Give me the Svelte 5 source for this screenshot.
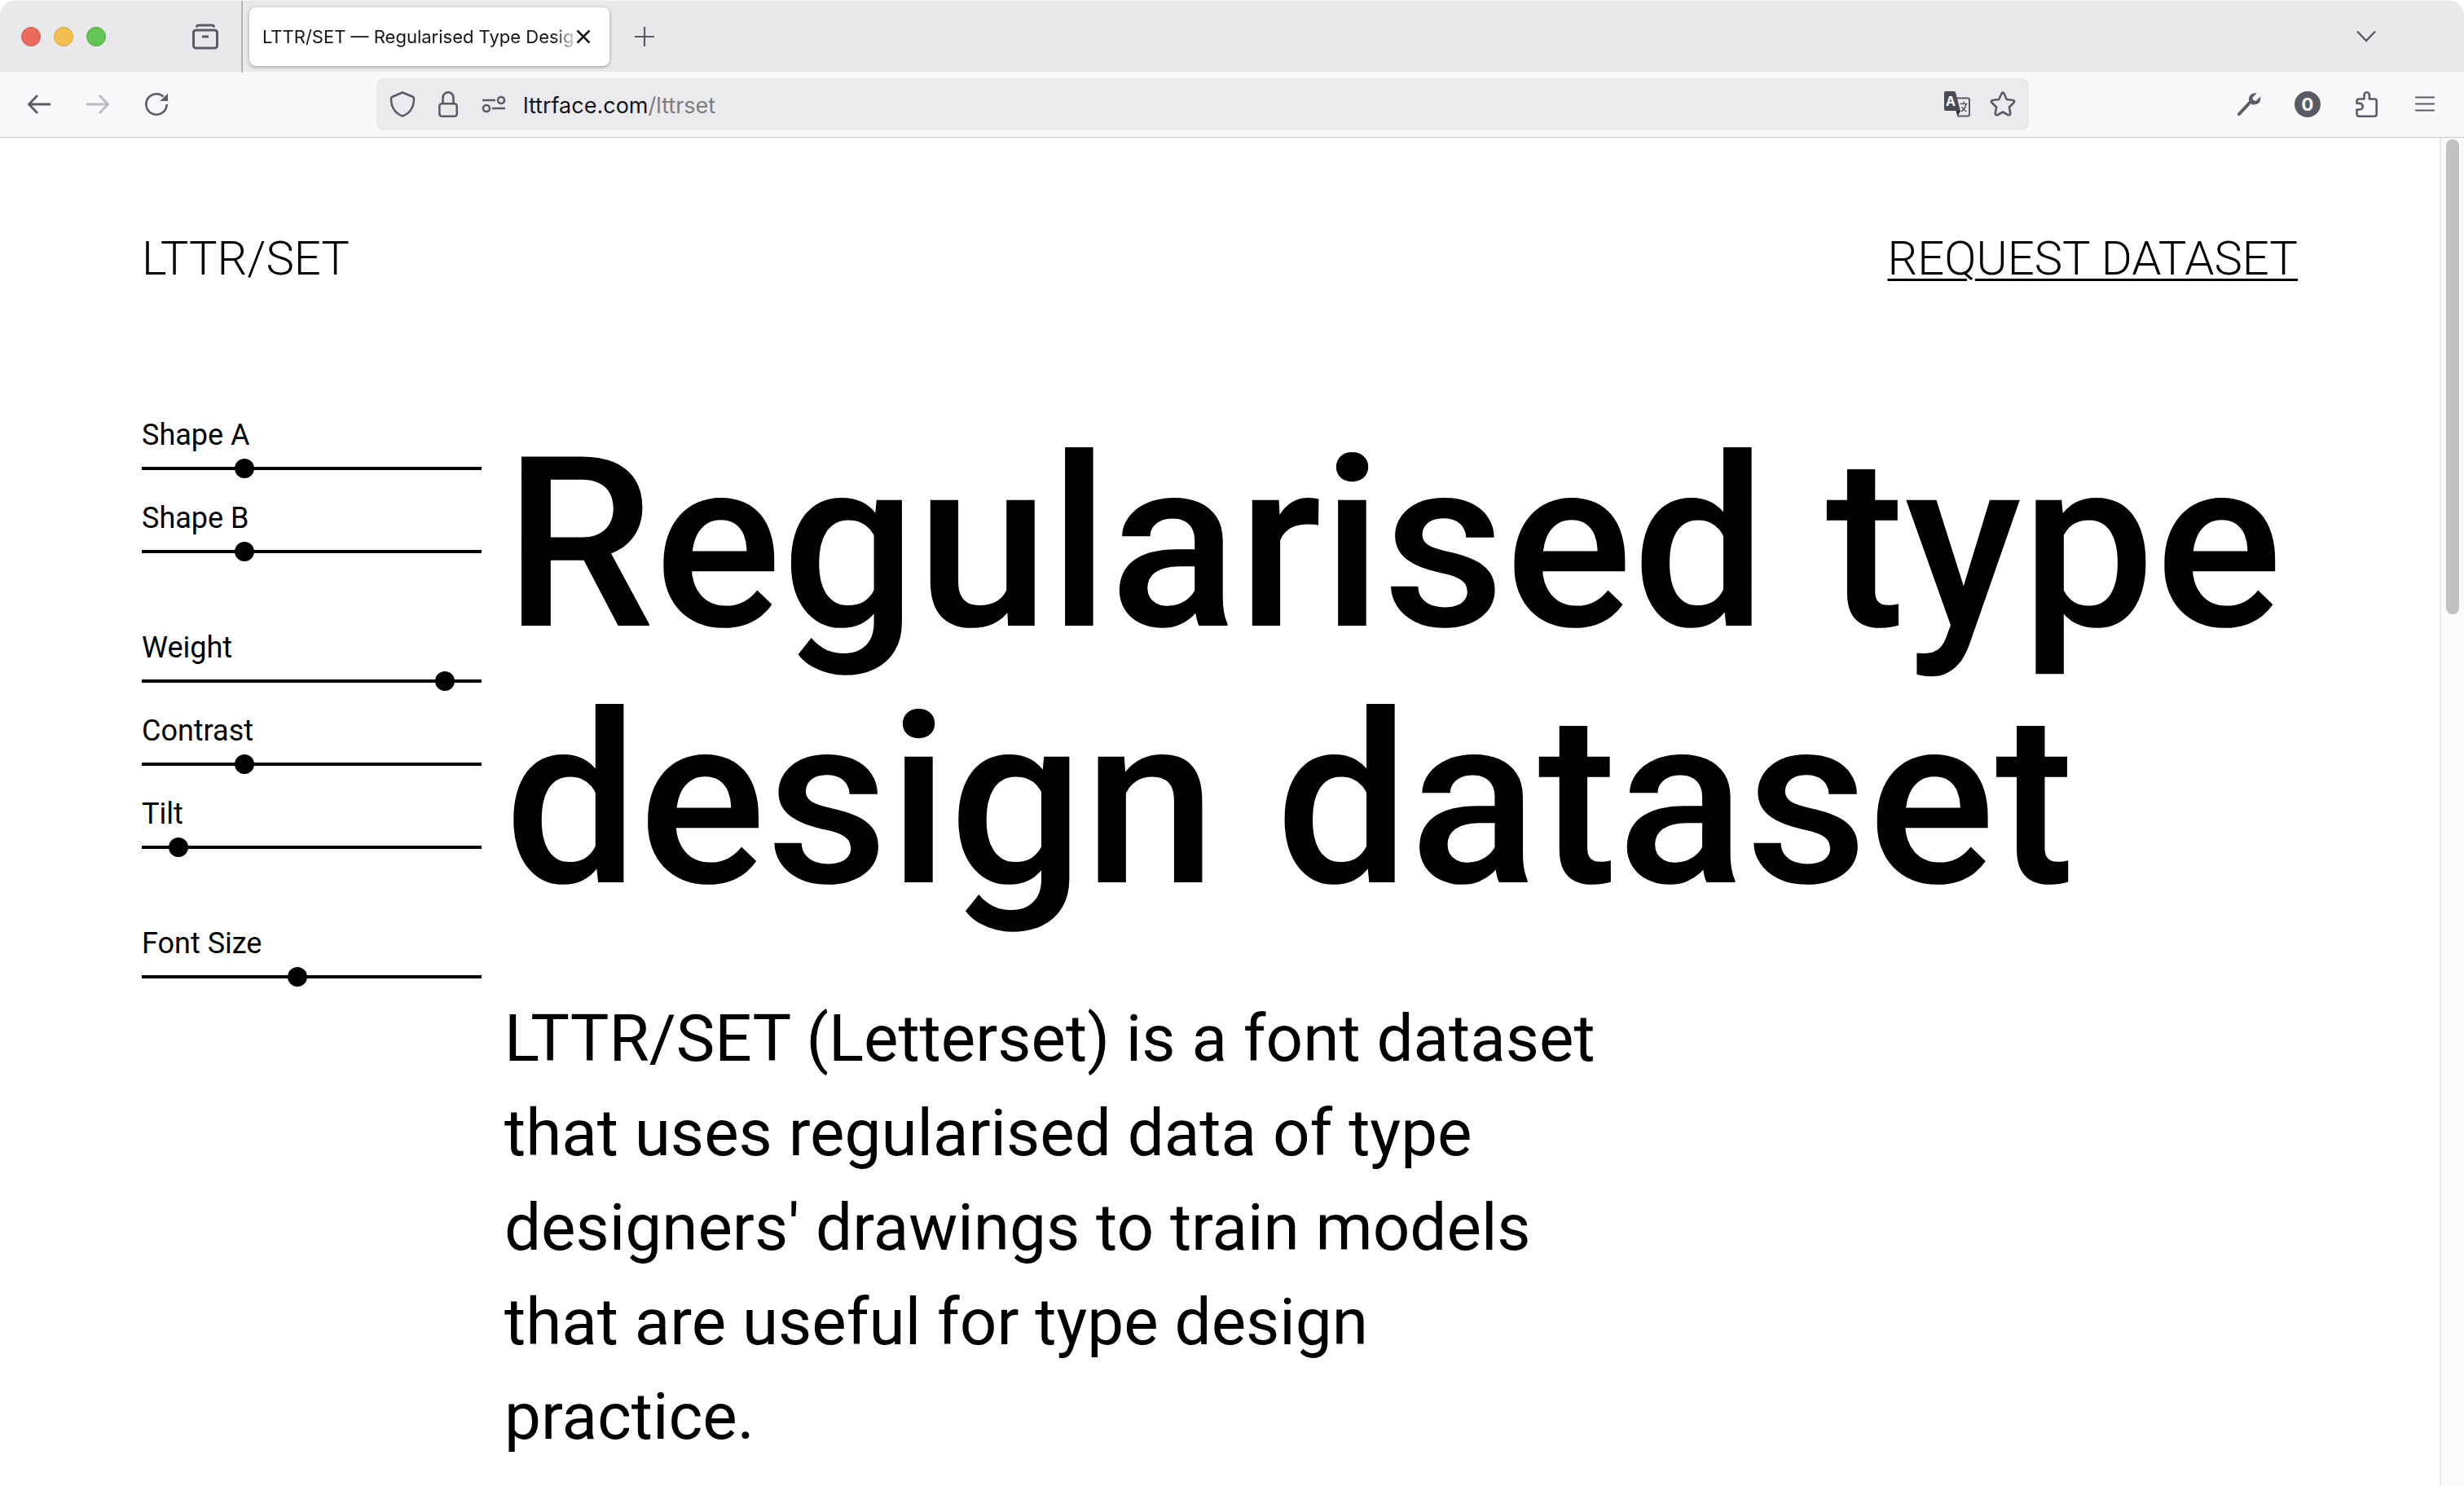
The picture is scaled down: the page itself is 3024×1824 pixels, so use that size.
<script>
  let groups = [
    [
      { id: "shape-a", label: "Shape A", value: 29 },
      { id: "shape-b", label: "Shape B", value: 29 },
    ],
    [
      { id: "weight", label: "Weight", value: 91.6 },
      { id: "contrast", label: "Contrast", value: 29 },
      { id: "tilt", label: "Tilt", value: 8.4 },
    ],
    [{ id: "font-size", label: "Font Size", value: 45.5 }],
  ];
</script>

<div class="window">
  <div class="tabbar">
    <div class="lights">
      <button class="light red" aria-label="Close window"></button>
      <button class="light yellow" aria-label="Minimise window"></button>
      <button class="light green" aria-label="Zoom window"></button>
    </div>
    <button class="icon view" aria-label="Firefox View">
      <svg viewBox="0 0 32 32" fill="none" stroke="currentColor" stroke-width="3">
        <rect x="1.5" y="8" width="29" height="22" rx="3" />
        <path d="M5.5 4.500 Q5.5 2 8 2 H24 Q26.5 2 26.5 4.500" />
        <path d="M12 16h8" />
      </svg>
    </button>
    <div class="tab">
      <span class="title">LTTR/SET — Regularised Type Desig</span>
      <button class="icon close" aria-label="Close tab">
        <svg viewBox="0 0 18 18" stroke="currentColor" stroke-width="2.5">
          <path d="M1.5 1.5l15 15M16.5 1.5l-15 15" />
        </svg>
      </button>
    </div>
    <button class="icon plus" aria-label="New tab">
      <svg viewBox="0 0 24 24" stroke="currentColor" stroke-width="2.2">
        <path d="M12 0v24M0 12h24" />
      </svg>
    </button>
    <button class="icon chevron" aria-label="List all tabs">
      <svg viewBox="0 0 24 24" fill="none" stroke="currentColor" stroke-width="2.4">
        <path d="M1 5.500l11 11.5L23 5.500" />
      </svg>
    </button>
  </div>

  <div class="toolbar">
    <div class="nav">
      <button class="icon" aria-label="Back">
        <svg viewBox="0 0 32 32" fill="none" stroke="currentColor" stroke-width="2.8">
          <path d="M30 16H4M14 5L3.5 16L14 27" />
        </svg>
      </button>
      <button class="icon" aria-label="Forward" disabled>
        <svg viewBox="0 0 32 32" fill="none" stroke="currentColor" stroke-width="2.8">
          <path d="M2 16H28M18 5L28.5 16L18 27" />
        </svg>
      </button>
      <button class="icon" aria-label="Reload">
        <svg viewBox="0 0 32 32" fill="none" stroke="currentColor" stroke-width="2.6">
          <path d="M28.7 16A12.7 12.7 0 1 1 24.5 6.5" />
          <path d="M30 2.5V12H20.500z" fill="currentColor" stroke="none" />
        </svg>
      </button>
    </div>

    <div class="urlbar">
      <div class="site">
        <button class="icon" aria-label="Tracking protection">
          <svg viewBox="0 0 32 32" fill="none" stroke="currentColor" stroke-width="2.5" stroke-linejoin="round">
            <path d="M16 1.5L29 7q1 .5 1 2C30 19 25 27 16 30.5C7 27 2 19 2 9q0-1.500 1-2z" />
          </svg>
        </button>
        <button class="icon" aria-label="Site information">
          <svg viewBox="0 0 32 32" fill="none" stroke="currentColor" stroke-width="2.6">
            <rect x="5.3" y="15.3" width="21.400" height="15.4" rx="3" />
            <path d="M9.500 15V8a6.500 6.7 0 0 1 13 0v7" />
          </svg>
        </button>
        <button class="icon" aria-label="Permissions">
          <svg viewBox="0 0 32 32" fill="none" stroke="currentColor" stroke-width="2.6">
            <path d="M2 11h16M14 21h16" />
            <circle cx="25" cy="11" r="4" />
            <circle cx="7" cy="21" r="4" />
          </svg>
        </button>
      </div>
      <a class="address" href="#top">lttrface.com<span>/lttrset</span></a>
      <div class="site">
        <button class="icon" aria-label="Translate this page">
          <svg viewBox="0 0 32 32">
            <path d="M15 8.5h14q2 0 2 2v18q0 2-2 2H16.5" fill="none" stroke="currentColor" stroke-width="2" />
            <path d="M2 0h10q1.5 0 2 1.5L20 24H2q-2 0-2-2V2q0-2 2-2z" fill="#4c4b54" />
            <path d="M14.5 24H20l-3.500 7z" fill="#2b2a33" />
            <text x="8" y="18" text-anchor="middle" fill="#fff">A</text>
            <path d="M19.5 15.5h9M24 12.5v3M27 16q-1.500 6-6 9M21.5 19q2 4 6 6" fill="none" stroke="currentColor" stroke-width="1.6" />
          </svg>
        </button>
        <button class="icon" aria-label="Bookmark this page">
          <svg viewBox="0 0 32 32" fill="none" stroke="currentColor" stroke-width="2.6" stroke-linejoin="round">
            <path d="M14.3 3.3q1.700-3.300 3.4 0l3.1 6.7 7.5 1q3.2.7 1 3.2l-5.400 5.3 1.3 7.3q.2 3.4-2.900 2.2L16 25.5l-6.300 3.5q-3.100 1.2-2.900-2.200l1.3-7.300-5.400-5.300q-2.200-2.500 1-3.200l7.5-1z" />
          </svg>
        </button>
      </div>
    </div>

    <div class="tools">
      <button class="icon" aria-label="Developer tools">
        <svg viewBox="0 0 32 32">
          <path d="M4 28L18 13" stroke="currentColor" stroke-width="4" stroke-linecap="round" />
          <path d="M25.5 2.5q-5-1-8 2.5-2.500 3.5-1 8l3 3q5 1.5 8.5-1.500 3-3 2-8l-5 5q-2 .8-3.500-.7t-.7-3.300z" fill="currentColor" />
        </svg>
      </button>
      <span class="badge">0</span>
      <button class="icon" aria-label="Extensions">
        <svg viewBox="0 0 32 32" fill="none" stroke="currentColor" stroke-width="2.6" stroke-linejoin="round">
          <path d="M13.5 9.5V5a3.2 3.7 0 0 1 6.4 0v4.5H26q2.7 0 2.7 2.5v16q0 2.7-2.700 2.7H7.5q-3 0-3-2.700v-5.500H8a3.8 3.8 0 0 0 0-7.600H4.5V12q0-2.500 3-2.500z" />
        </svg>
      </button>
      <button class="icon" aria-label="Menu">
        <svg viewBox="0 0 32 32" stroke="currentColor" stroke-width="2.2" stroke-linecap="round">
          <path d="M5 7.5h22M5 15.5h22M5 23.5h22" />
        </svg>
      </button>
    </div>
  </div>

  <div class="viewport">
    <div class="page" id="top">
      <header>
        <span>LTTR/SET</span>
        <a href="#request">REQUEST DATASET</a>
      </header>
      <main>
        <form>
          {#each groups as group}
            <div class="group">
              {#each group as slider}
                <div class="slider">
                  <label for={slider.id}>{slider.label}</label>
                  <input type="range" id={slider.id} min="0" max="100" step="0.1" bind:value={slider.value} />
                </div>
              {/each}
            </div>
          {/each}
        </form>
        <article>
          <h1>Regularised type design dataset</h1>
          <p>
            LTTR/SET (Letterset) is a font dataset that uses regularised data of
            type designers' drawings to train models that are useful for type
            design practice.
          </p>
        </article>
      </main>
    </div>
    <div class="scrollbar"><div class="thumb"></div></div>
  </div>
</div>

<style>
  :global(body) {
    margin: 0;
    background: #fff;
  }

  .window {
    display: flex;
    flex-direction: column;
    height: 100vh;
    overflow: hidden;
    border-radius: 20px 20px 0 0;
    color: #5b5b66;
    font-family: Inter, "Liberation Sans", sans-serif;
  }

  button {
    padding: 0;
    border: 0;
    background: none;
    color: inherit;
  }

  .icon {
    flex: none;
    width: 32px;
    height: 32px;
  }

  .icon svg {
    display: block;
    width: 100%;
    height: 100%;
  }

  .icon:disabled {
    opacity: 0.4;
  }

  .tabbar {
    display: flex;
    align-items: center;
    flex: none;
    height: 88px;
    box-sizing: border-box;
    border-top: 1px solid #f4f4f5;
    background: #e9e9eb;
  }

  .lights {
    display: flex;
    gap: 16px;
    padding-left: 26px;
  }

  .light {
    width: 24px;
    height: 24px;
    border: 1px solid #d3584d;
    border-radius: 50%;
    background: #ed6a5e;
  }

  .yellow {
    border-color: #d9a440;
    background: #f5bf4f;
  }

  .green {
    border-color: #50a83f;
    background: #62c655;
  }

  .view {
    margin: 0 28px 0 106px;
  }

  .tab {
    position: relative;
    display: flex;
    align-items: center;
    justify-content: space-between;
    box-sizing: border-box;
    width: 442px;
    height: 72px;
    margin-left: 10px;
    padding: 0 23px 0 16px;
    border-radius: 8px;
    background: #fff;
    box-shadow: 0 1px 4px rgba(0, 0, 0, 0.35);
    color: #15141a;
  }

  /* full height rule left of the tabs */
  .tab::before {
    content: "";
    position: absolute;
    left: -10px;
    top: -8px;
    width: 2px;
    height: 88px;
    background: #b4b4b6;
  }

  .title {
    white-space: nowrap;
    font-size: 22px;
    mask-image: linear-gradient(to left, rgba(0, 0, 0, 0.2), #000 24px);
  }

  .close {
    width: 18px;
    height: 18px;
  }

  .plus {
    width: 24px;
    height: 24px;
    margin-left: 31px;
  }

  .chevron {
    width: 24px;
    height: 24px;
    margin: 0 108px 0 auto;
  }

  .toolbar {
    display: flex;
    align-items: center;
    flex: none;
    height: 80px;
    border-bottom: 1px solid #c8c8ca;
    background: #f9f9fb;
  }

  .nav {
    display: flex;
    gap: 40px;
    width: 430px;
    padding-left: 32px;
  }

  .urlbar {
    display: flex;
    align-items: center;
    gap: 20px;
    flex: 1;
    height: 64px;
    padding: 0 16px;
    border-radius: 8px;
    background: #ebebed;
  }

  .site {
    display: flex;
    gap: 24px;
  }

  .address {
    flex: 1;
    padding-top: 2px;
    color: #15141a;
    font-size: 27px;
    text-decoration: none;
  }

  .address span {
    color: #7c7c82;
  }

  .icon text {
    font: bold 16px Inter, sans-serif;
  }

  .tools {
    display: flex;
    gap: 40px;
    width: 248px;
    padding: 0 32px 0 254px;
  }

  .badge {
    width: 32px;
    height: 32px;
    border-radius: 50%;
    background: #5b5b66;
    color: #fff;
    font-size: 22px;
    font-weight: 700;
    line-height: 32px;
    text-align: center;
  }

  .viewport {
    display: flex;
    flex: 1;
    min-height: 0;
  }

  .page {
    flex: 1;
    padding: 116px 174px 0;
    overflow: hidden;
    color: #000;
    font-family: Roboto, "Liberation Sans", sans-serif;
  }

  header {
    display: flex;
    justify-content: space-between;
    margin-bottom: 162px;
    font-size: 58px;
    font-weight: 300;
    line-height: 64px;
  }

  header a {
    color: inherit;
    text-decoration-thickness: 3px;
    text-underline-offset: 5px;
  }

  main {
    display: grid;
    grid-template-columns: 417px 1fr;
    gap: 28px;
  }

  .group {
    display: grid;
    gap: 26px;
    margin-bottom: 83px;
  }

  label {
    display: block;
    font-size: 36px;
    line-height: 46px;
  }

  input {
    display: block;
    width: 100%;
    height: 24px;
    margin: 6px 0 0;
    appearance: none;
    background: linear-gradient(#000, #000) center / 100% 4px no-repeat;
  }

  input::-webkit-slider-thumb {
    appearance: none;
    width: 24px;
    height: 24px;
    border-radius: 50%;
    background: #000;
  }

  input::-moz-range-thumb {
    width: 24px;
    height: 24px;
    border: 0;
    border-radius: 50%;
    background: #000;
  }

  h1 {
    margin: 0 0 76px;
    font-size: 292px;
    font-weight: 500;
    line-height: 315px;
  }

  p {
    max-width: 1380px;
    margin: 0;
    font-size: 80px;
    line-height: 116px;
  }

  .scrollbar {
    box-sizing: border-box;
    width: 30px;
    padding: 2px 6px 0;
    border-left: 2px solid #e8e8e8;
    background: #fafafa;
  }

  .thumb {
    height: 583px;
    border-radius: 8px;
    background: #c1c1c1;
  }
</style>
